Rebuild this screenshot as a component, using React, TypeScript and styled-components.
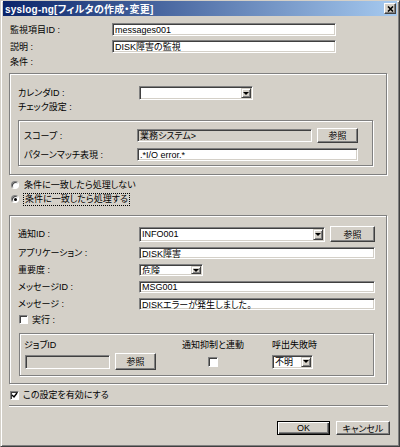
import React from "react";
import styled, { createGlobalStyle } from "styled-components";

const GlobalStyle = createGlobalStyle`
  html, body {
    margin: 0;
    padding: 0;
    background: #d4d0c8;
  }
  body {
    font-family: "Liberation Sans", "Noto Sans CJK JP", sans-serif;
    font-size: 9px;
    font-feature-settings: "palt";
    color: #000;
  }
  * {
    box-sizing: border-box;
  }
`;

const Window = styled.div`
  width: 400px;
  height: 447px;
  background: #d4d0c8;
  border: 1px solid;
  border-color: #d4d0c8 #404040 #404040 #d4d0c8;
  box-shadow: inset 1px 1px 0 #fff, inset -1px -1px 0 #808080;
  padding: 0 2px 2px 2px;
  display: flex;
  flex-direction: column;
`;

const TitleBar = styled.div`
  height: 15px;
  display: flex;
  align-items: center;
  justify-content: space-between;
  padding: 0 1px 0 2px;
  background: linear-gradient(to right, #0a246a, #a6caf0);
`;

const Title = styled.span`
  color: #fff;
  font-weight: bold;
  font-size: 10px;
  letter-spacing: 0.2px;
  white-space: nowrap;
`;

const CloseButton = styled.span`
  width: 12px;
  height: 11px;
  display: flex;
  align-items: center;
  justify-content: center;
  background: #d4d0c8;
  border: 1px solid;
  border-color: #fff #404040 #404040 #fff;
  box-shadow: inset -1px -1px 0 #808080;
`;

const Content = styled.div`
  display: flex;
  flex-direction: column;
  padding: 0 9px 0 7px;
`;

const Row = styled.div<{ $mt?: number; $h: number }>`
  display: flex;
  align-items: center;
  height: ${p => p.$h}px;
  margin-top: ${p => p.$mt ?? 0}px;
  white-space: nowrap;
`;

const Label = styled.span<{ $w?: number }>`
  width: ${p => (p.$w ? `${p.$w}px` : "auto")};
  flex-shrink: 0;
  line-height: 12px;
`;

const Group = styled.div<{ $mt: number; $pad: string; $ml?: number }>`
  margin-top: ${p => p.$mt}px;
  margin-left: ${p => p.$ml ?? -1}px;
  margin-right: 1px;
  padding: ${p => p.$pad};
  border: 1px solid #808080;
  box-shadow: inset 1px 1px 0 #fff, 1px 1px 0 #fff;
  display: flex;
  flex-direction: column;
`;

const TextBox = styled.input<{ $w: number; $h?: number; $disabled?: boolean }>`
  width: ${p => p.$w}px;
  height: ${p => p.$h ?? 13}px;
  margin: 0;
  padding: 0 2px;
  font: inherit;
  color: #000;
  outline: none;
  background: ${p => (p.$disabled ? "#d4d0c8" : "#fff")};
  border: 1px solid;
  border-color: #808080 #fff #fff #808080;
  box-shadow: inset 1px 1px 0 #404040, inset -1px -1px 0 #d4d0c8;
`;

const Combo = styled.div<{ $w: number; $h?: number }>`
  width: ${p => p.$w}px;
  height: ${p => p.$h ?? 13}px;
  display: flex;
  align-items: stretch;
  background: #fff;
  border: 1px solid;
  border-color: #808080 #fff #fff #808080;
  box-shadow: inset 1px 1px 0 #404040, inset -1px -1px 0 #d4d0c8;
  padding: 1px;
`;

const ComboValue = styled.span`
  flex: 1;
  padding-left: 1px;
  display: flex;
  align-items: center;
  overflow: hidden;
`;

const ComboArrow = styled.span`
  width: 10px;
  display: flex;
  align-items: center;
  justify-content: center;
  background: #d4d0c8;
  border: 1px solid;
  border-color: #d4d0c8 #404040 #404040 #d4d0c8;
  box-shadow: inset 1px 1px 0 #fff, inset -1px -1px 0 #808080;

  &::after {
    content: "";
    border-left: 3px solid transparent;
    border-right: 3px solid transparent;
    border-top: 3px solid #000;
  }
`;

const Button = styled.button<{ $w: number; $h?: number; $ml?: number; $default?: boolean }>`
  width: ${p => p.$w}px;
  height: ${p => p.$h ?? 15}px;
  margin: 0 0 0 ${p => p.$ml ?? 0}px;
  padding: 0;
  font: inherit;
  color: #000;
  background: #d4d0c8;
  border: 1px solid;
  border-color: ${p => (p.$default ? "#000" : "#fff #404040 #404040 #fff")};
  box-shadow: ${p =>
    p.$default
      ? "inset 1px 1px 0 #fff, inset -1px -1px 0 #404040, inset -2px -2px 0 #808080"
      : "inset -1px -1px 0 #808080"};
`;

const CheckBox = styled.span<{ $size?: number; $ml?: number }>`
  width: ${p => p.$size ?? 9}px;
  height: ${p => p.$size ?? 9}px;
  margin-left: ${p => p.$ml ?? 0}px;
  margin-right: 4px;
  flex-shrink: 0;
  display: inline-flex;
  align-items: center;
  justify-content: center;
  background: #fff;
  border: 1px solid;
  border-color: #808080 #fff #fff #808080;
  box-shadow: inset 1px 1px 0 #404040;
`;

const Radio = styled.span<{ $checked?: boolean }>`
  width: 8px;
  height: 8px;
  margin: 0 5px 0 1px;
  border-radius: 50%;
  flex-shrink: 0;
  background: #fff;
  border: 1px solid;
  border-color: #808080 #fff #fff #808080;
  box-shadow: inset 1px 1px 0 #404040;
  display: inline-flex;
  align-items: center;
  justify-content: center;

  &::after {
    content: "";
    display: ${p => (p.$checked ? "block" : "none")};
    width: 3px;
    height: 3px;
    border-radius: 50%;
    background: #000;
  }
`;

const FocusText = styled.span`
  outline: 1px dotted #000;
  outline-offset: 0;
  padding: 0 1px;
  line-height: 11px;
`;

const SubColumns = styled.div`
  display: flex;
`;

const SubColumn = styled.div<{ $w?: number; $center?: boolean }>`
  width: ${p => (p.$w ? `${p.$w}px` : "auto")};
  display: flex;
  flex-direction: column;
  align-items: ${p => (p.$center ? "center" : "flex-start")};
`;

const Separator = styled.div`
  margin: 5px 0 0 -1px;
  height: 2px;
  border-top: 1px solid #808080;
  border-bottom: 1px solid #fff;
`;

const Footer = styled.div`
  margin: 14px -2px 0 0;
  display: flex;
  justify-content: flex-end;
  gap: 6px;
`;

const Check = () => (
  <svg width="7" height="7" viewBox="0 0 7 7">
    <path d="M1 3 L3 5 L6 1" fill="none" stroke="#000" strokeWidth="1.4" />
  </svg>
);

const CloseGlyph = () => (
  <svg width="7" height="6" viewBox="0 0 7 6">
    <path d="M1 0.5 L6 5.5 M6 0.5 L1 5.5" stroke="#000" strokeWidth="1.6" />
  </svg>
);

const App: React.FC = () => {
  return (
    <>
      <GlobalStyle />
      <Window>
        <TitleBar>
          <Title>syslog-ng[フィルタの作成・変更]</Title>
          <CloseButton>
            <CloseGlyph />
          </CloseButton>
        </TitleBar>

        <Content>
          <Row $mt={7} $h={13}>
            <Label $w={102}>監視項目ID :</Label>
            <TextBox $w={224} readOnly defaultValue="messages001" />
          </Row>
          <Row $mt={4} $h={13}>
            <Label $w={102}>説明 :</Label>
            <TextBox $w={224} readOnly defaultValue="DISK障害の監視" />
          </Row>
          <Row $mt={3} $h={12}>
            <Label>条件 :</Label>
          </Row>

          <Group $mt={5} $pad="12px 12px 8px 8px">
            <Row $h={14}>
              <Label $w={121}>カレンダID :</Label>
              <Combo $w={114} $h={14}>
                <ComboValue />
                <ComboArrow />
              </Combo>
            </Row>
            <Row $mt={1} $h={12}>
              <Label>チェック設定 :</Label>
            </Row>
            <Group $mt={7} $ml={0} $pad="7px 14px 4px 5px">
              <Row $h={15}>
                <Label $w={113}>スコープ :</Label>
                <TextBox $w={176} $disabled readOnly defaultValue="業務システム>" />
                <Button $w={41} $ml={5}>参照</Button>
              </Row>
              <Row $mt={5} $h={13}>
                <Label $w={113}>パターンマッチ表現 :</Label>
                <TextBox $w={221} readOnly defaultValue=".*I/O error.*" />
              </Row>
            </Group>
          </Group>

          <Row $mt={4} $h={12}>
            <Radio />
            <Label>条件に一致したら処理しない</Label>
          </Row>
          <Row $mt={2} $h={12}>
            <Radio $checked />
            <FocusText>条件に一致したら処理する</FocusText>
          </Row>

          <Group $mt={10} $pad="10px 11px 7px 8px">
            <Row $h={16}>
              <Label $w={121}>通知ID :</Label>
              <Combo $w={186} $h={15}>
                <ComboValue>INFO001</ComboValue>
                <ComboArrow />
              </Combo>
              <Button $w={45} $h={16} $ml={5}>参照</Button>
            </Row>
            <Row $mt={5} $h={12}>
              <Label $w={121}>アプリケーション :</Label>
              <TextBox $w={236} $h={12} readOnly defaultValue="DISK障害" />
            </Row>
            <Row $mt={5} $h={12}>
              <Label $w={121}>重要度 :</Label>
              <Combo $w={64} $h={12}>
                <ComboValue>危険</ComboValue>
                <ComboArrow />
              </Combo>
            </Row>
            <Row $mt={5} $h={12}>
              <Label $w={121}>メッセージID :</Label>
              <TextBox $w={236} $h={12} readOnly defaultValue="MSG001" />
            </Row>
            <Row $mt={5} $h={12}>
              <Label $w={121}>メッセージ :</Label>
              <TextBox $w={236} $h={12} readOnly defaultValue="DISKエラーが発生しました。" />
            </Row>
            <Row $mt={4} $h={11}>
              <CheckBox $ml={1} />
              <Label>実行 :</Label>
            </Row>

            <Group $mt={8} $ml={1} $pad="5px 8px 5px 4px">
              <SubColumns>
                <SubColumn $w={158}>
                  <Row $h={12}>
                    <Label>ジョブID</Label>
                  </Row>
                  <Row $mt={2} $h={17}>
                    <TextBox $w={85} $h={14} $disabled readOnly defaultValue="" style={{ marginLeft: 1 }} />
                    <Button $w={41} $h={17} $ml={5}>参照</Button>
                  </Row>
                </SubColumn>
                <SubColumn $w={90}>
                  <SubColumn $center>
                    <Row $h={12}>
                      <Label>通知抑制と連動</Label>
                    </Row>
                    <Row $mt={2} $h={17}>
                      <CheckBox $size={10} style={{ marginRight: 0 }} />
                    </Row>
                  </SubColumn>
                </SubColumn>
                <SubColumn>
                  <Row $h={12}>
                    <Label>呼出失敗時</Label>
                  </Row>
                  <Row $mt={2} $h={17}>
                    <Combo $w={41} $h={14}>
                      <ComboValue>不明</ComboValue>
                      <ComboArrow />
                    </Combo>
                  </Row>
                </SubColumn>
              </SubColumns>
            </Group>
          </Group>

          <Row $mt={6} $h={10}>
            <CheckBox>
              <Check />
            </CheckBox>
            <Label>この設定を有効にする</Label>
          </Row>

          <Separator />

          <Footer>
            <Button $w={53} $h={14} $default>OK</Button>
            <Button $w={54} $h={14}>キャンセル</Button>
          </Footer>
        </Content>
      </Window>
    </>
  );
};

export default App;
